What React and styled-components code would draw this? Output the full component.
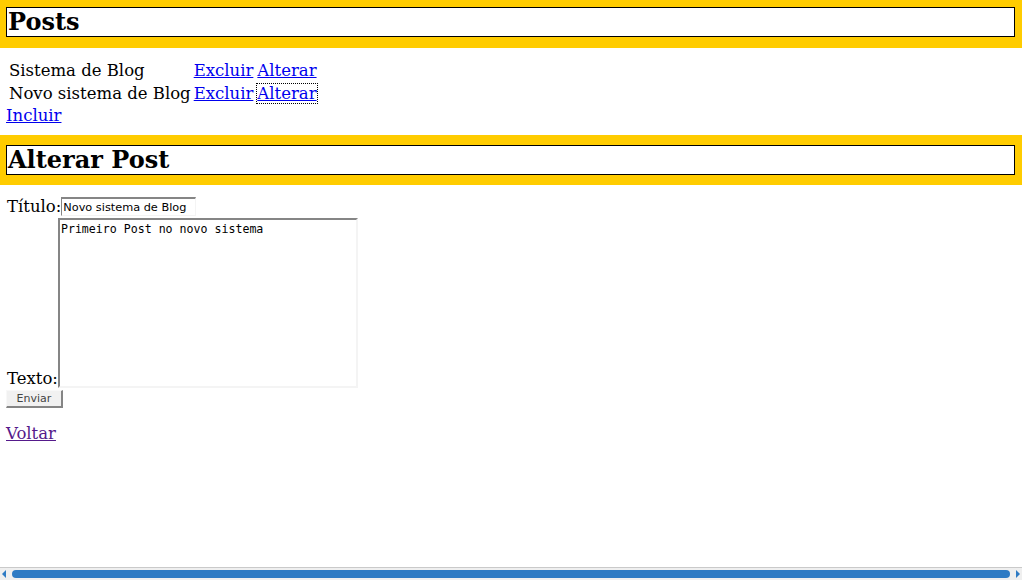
import React from 'react';
import styled, { createGlobalStyle } from 'styled-components';

const GlobalStyle = createGlobalStyle`
  body {
    margin: 0;
    background: #fff;
    color: #000;
    font-family: "DejaVu Serif", serif;
    font-size: 16.5px;
  }
`;

const Page = styled.div`
  width: 1022px;
  min-height: 567px;
`;

const Band = styled.div`
  background: #ffcc00;
  padding: ${({ first }) => (first ? '7px 7px 11px 6px' : '10px 7px 10px 6px')};
  margin-bottom: 10px;
`;

const Title = styled.h1`
  margin: 0;
  background: #fff;
  border: 1px solid #000;
  font-family: "DejaVu Serif", serif;
  font-size: 24px;
  font-weight: bold;
  line-height: 28px;
  padding-left: 1px;
`;

const Body = styled.div`
  padding: 0 6px;
`;

const Table = styled.table`
  border-spacing: 2px;
  margin-left: 0;
  font-size: 16.5px;
  td {
    padding: 1px;
    line-height: 19px;
    white-space: nowrap;
  }
`;

const Actions = styled.td`
  padding-left: 0 !important;
`;

const Link = styled.a`
  color: ${({ visited }) => (visited ? '#551a8b' : '#0000ee')};
  text-decoration: underline;
  line-height: 19px;
  outline: ${({ focused }) => (focused ? '1px dotted #000' : 'none')};
  margin-left: ${({ spaced }) => (spaced ? '4px' : '0')};
  cursor: pointer;
`;

const Line = styled.div`
  line-height: 19px;
  margin-bottom: 10px;
`;

const Form = styled.form`
  padding-top: 2px;
`;

const Row = styled.div`
  display: flex;
  align-items: flex-end;
  margin-bottom: 2px;
`;

const Label = styled.span`
  line-height: 19px;
  padding-left: 1px;
`;

const TextInput = styled.input`
  box-sizing: border-box;
  width: 135px;
  height: 19px;
  margin: 0;
  padding: 0 1px;
  font-family: "DejaVu Sans", sans-serif;
  font-size: 11.3px;
  color: #000;
  background: #fff;
  border-style: solid;
  border-width: 2px 1px 1px 1px;
  border-color: #858585 #f4f4f4 #f4f4f4 #858585;
  outline: none;
`;

const TextArea = styled.textarea`
  box-sizing: border-box;
  width: 300px;
  height: 170px;
  margin: 0;
  padding: 2px 1px;
  resize: none;
  font-family: "DejaVu Sans Mono", monospace;
  font-size: 11.6px;
  line-height: 14px;
  color: #000;
  background: #fff;
  border-style: solid;
  border-width: 2px;
  border-color: #858585 #f4f4f4 #f4f4f4 #858585;
  outline: none;
`;

const Button = styled.button`
  box-sizing: border-box;
  width: 57px;
  height: 18px;
  margin: 0;
  padding: 0;
  font-family: "DejaVu Sans", sans-serif;
  font-size: 11px;
  color: #444;
  background: #f1f1f1;
  border-style: solid;
  border-width: 1px 2px 2px 1px;
  border-color: #f8f8f8 #858585 #858585 #f8f8f8;
`;

const Para = styled.p`
  margin: 16px 0;
  line-height: 19px;
`;

const Scrollbar = styled.div`
  position: fixed;
  left: 0;
  right: 0;
  bottom: 0;
  height: 12px;
  border-top: 1px solid #cacaca;
  background: #efefef;
  display: flex;
  align-items: center;
  padding: 0 2px;
  gap: 3px;
`;

const Arrow = styled.span`
  width: 0;
  height: 0;
  border-top: 4px solid transparent;
  border-bottom: 4px solid transparent;
  ${({ dir }) =>
    dir === 'left'
      ? 'border-right: 4px solid #2e7bc4;'
      : 'border-left: 4px solid #2e7bc4;'}
`;

const Thumb = styled.div`
  flex: 1;
  height: 8px;
  margin: 0 3px;
  border-radius: 4px;
  background: #2e7bc4;
`;

const posts = [
  { id: 1, title: 'Sistema de Blog' },
  { id: 2, title: 'Novo sistema de Blog' },
];

const App = () => {
  return (
    <Page>
      <GlobalStyle />
      <Band first>
        <Title>Posts</Title>
      </Band>
      <Body>
        <Table>
          <tbody>
            {posts.map((p, i) => (
              <tr key={p.id}>
                <td>{p.title}</td>
                <Actions>
                  <Link>Excluir</Link>
                  <Link spaced focused={i === 1}>Alterar</Link>
                </Actions>
              </tr>
            ))}
          </tbody>
        </Table>
        <Line>
          <Link>Incluir</Link>
        </Line>
      </Body>
      <Band>
        <Title>Alterar Post</Title>
      </Band>
      <Body>
        <Form onSubmit={(e) => e.preventDefault()}>
          <Row>
            <Label>Título:</Label>
            <TextInput defaultValue="Novo sistema de Blog" />
          </Row>
          <Row>
            <Label>Texto:</Label>
            <TextArea defaultValue="Primeiro Post no novo sistema" />
          </Row>
          <Row>
            <Button type="submit">Enviar</Button>
          </Row>
        </Form>
        <Para>
          <Link visited>Voltar</Link>
        </Para>
      </Body>
      <Scrollbar>
        <Arrow dir="left" />
        <Thumb />
        <Arrow dir="right" />
      </Scrollbar>
    </Page>
  );
};

export default App;
